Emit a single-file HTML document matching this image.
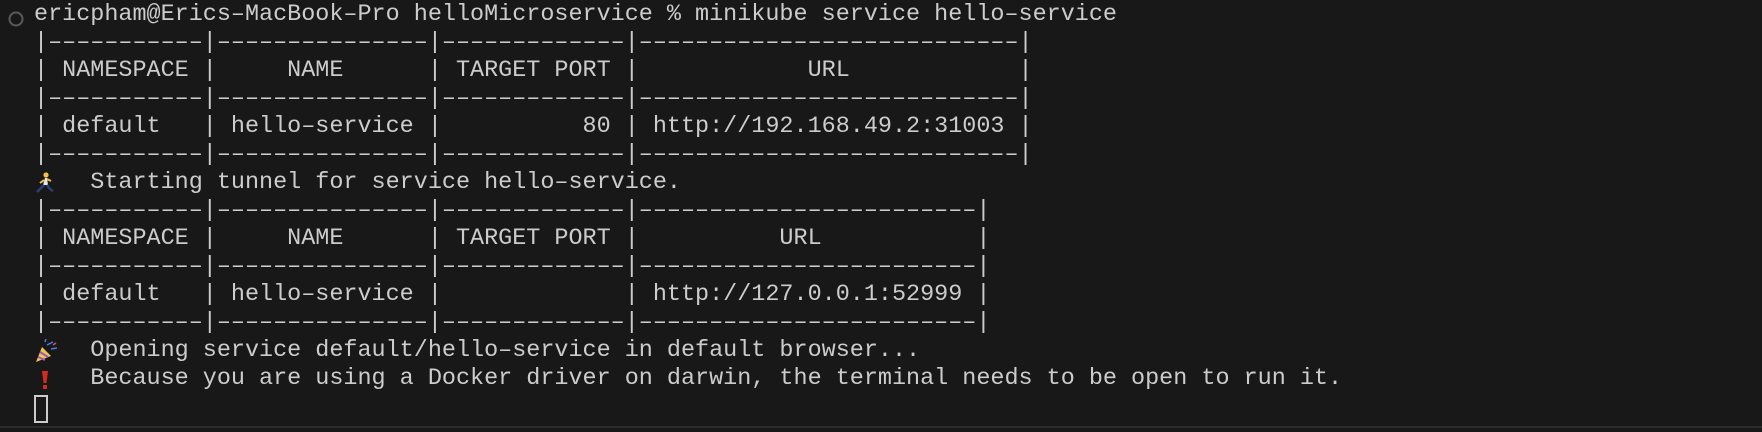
<!DOCTYPE html>
<html><head><meta charset="utf-8"><style>
html,body{margin:0;padding:0;background:#181818;width:1762px;height:432px;overflow:hidden;}
.l{position:absolute;left:34px;height:28px;line-height:28px;white-space:pre;font-family:"Liberation Mono",monospace;font-size:23.45px;color:#cccccc;}
.bot{position:absolute;left:0;top:426px;width:1762px;height:2px;background:#2b2b2b;}
</style></head><body>
<svg style="position:absolute;left:7px;top:10px" width="18" height="18"><circle cx="9" cy="9" r="6.5" fill="none" stroke="#5a5a5a" stroke-width="2"/></svg>
<div class="l" style="top:1px">ericpham@Erics–MacBook–Pro helloMicroservice % minikube service hello–service</div>
<div class="l" style="top:29px">|–––––––––––|–––––––––––––––|–––––––––––––|–––––––––––––––––––––––––––|</div>
<div class="l" style="top:57px">| NAMESPACE |     NAME      | TARGET PORT |            URL            |</div>
<div class="l" style="top:85px">|–––––––––––|–––––––––––––––|–––––––––––––|–––––––––––––––––––––––––––|</div>
<div class="l" style="top:113px">| default   | hello–service |          80 | http://192.168.49.2:31003 |</div>
<div class="l" style="top:141px">|–––––––––––|–––––––––––––––|–––––––––––––|–––––––––––––––––––––––––––|</div>
<svg style="position:absolute;left:35px;top:172px" width="22" height="22" viewBox="0 0 22 22">
<circle cx="11" cy="3" r="2.6" fill="#f3c04b"/>
<path d="M10 6 L8 13 L13 13 L12 6 Z" fill="#e8e8e8"/>
<path d="M9 8 L5 11 M12 7 L16 9" stroke="#f3c04b" stroke-width="2" fill="none"/>
<path d="M9 13 L6 16 L2 20 M12 13 L15 17 L18 19" stroke="#2a3f7a" stroke-width="2.4" fill="none"/>
</svg>
<div class="l" style="top:169px">    Starting tunnel for service hello–service.</div>
<div class="l" style="top:197px">|–––––––––––|–––––––––––––––|–––––––––––––|––––––––––––––––––––––––|</div>
<div class="l" style="top:225px">| NAMESPACE |     NAME      | TARGET PORT |          URL           |</div>
<div class="l" style="top:253px">|–––––––––––|–––––––––––––––|–––––––––––––|––––––––––––––––––––––––|</div>
<div class="l" style="top:281px">| default   | hello–service |             | http://127.0.0.1:52999 |</div>
<div class="l" style="top:309px">|–––––––––––|–––––––––––––––|–––––––––––––|––––––––––––––––––––––––|</div>
<svg style="position:absolute;left:33px;top:339px" width="26" height="26" viewBox="0 0 26 26">
<path d="M3 23 L9 8 L18 17 Z" fill="#f2c744"/>
<path d="M5 18 L12 21 M7 13 L15 18" stroke="#9b55c9" stroke-width="2"/>
<path d="M14 6 L20 3 M18 10 L24 9 M12 3 L13 0" stroke="#4a7de0" stroke-width="1.5"/>
<path d="M20 6 L23 4" stroke="#e0467a" stroke-width="1.5"/>
</svg>
<div class="l" style="top:337px">    Opening service default/hello–service in default browser...</div>
<svg style="position:absolute;left:40px;top:370px" width="10" height="20" viewBox="0 0 10 20"><path d="M2 1 L8 1 L6.5 13 L3.5 13 Z" fill="#d42a20"/><rect x="3" y="15" width="4" height="4" fill="#d42a20"/></svg>
<div class="l" style="top:365px">    Because you are using a Docker driver on darwin, the terminal needs to be open to run it.</div>
<div style="position:absolute;left:34px;top:395px;width:10px;height:24px;border:2px solid #cccccc"></div>
<div class="bot"></div>
</body></html>
